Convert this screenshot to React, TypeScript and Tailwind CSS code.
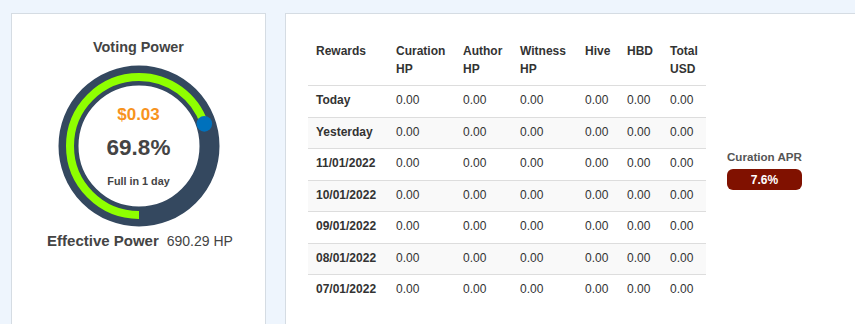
import React from "react";

const font = { fontFamily: '"Liberation Sans", Arial, sans-serif' };

const rows = [
  "Today",
  "Yesterday",
  "11/01/2022",
  "10/01/2022",
  "09/01/2022",
  "08/01/2022",
  "07/01/2022",
];

const colWidths = ["w-[80px]", "w-[67px]", "w-[57px]", "w-[65px]", "w-[42px]", "w-[43px]", "w-[44px]"];

function VotingDonut({ pct }: { pct: number }) {
  const r = 69;
  const c = 2 * Math.PI * r;
  const angle = ((90 + pct * 3.6) * Math.PI) / 180;
  const dotX = 81 + r * Math.cos(angle);
  const dotY = 81 + r * Math.sin(angle);
  return (
    <div className="relative w-[162px] h-[162px]">
      <svg width="162" height="162" viewBox="0 0 162 162">
        <circle cx="81" cy="81" r="70.5" fill="none" stroke="#34485f" strokeWidth="20" />
        <circle
          cx="81"
          cy="81"
          r={r}
          fill="none"
          stroke="#8fff00"
          strokeWidth="8"
          strokeDasharray={`${(pct / 100) * c} ${c}`}
          transform="rotate(90 81 81)"
        />
        <circle cx={dotX} cy={dotY} r="7.8" fill="#0071bc" />
      </svg>
      <div className="absolute inset-0 flex flex-col items-center pt-[40px]">
        <div className="text-[17px] leading-[20px] font-bold text-[#f7931e]">$0.03</div>
        <div className="mt-[9px] text-[22.5px] leading-[28px] font-bold text-[#444]">69.8%</div>
        <div className="mt-[12px] text-[10.8px] leading-[14px] font-bold text-[#444]">Full in 1 day</div>
      </div>
    </div>
  );
}

export default function App() {
  return (
    <div style={font} className="w-[855px] h-[324px] overflow-hidden bg-[#eef5fd] pl-[11px] pt-[13px] flex gap-[19px]">
      <div className="w-[255px] h-[340px] shrink-0 bg-white border border-[#d5dce3] flex flex-col items-center pt-[24px]">
        <div className="text-[14.4px] leading-[18px] font-bold text-[#444]">Voting Power</div>
        <div className="mt-[9px]">
          <VotingDonut pct={69.8} />
        </div>
        <div className="mt-[5px] flex items-baseline gap-[8px] text-[#444] leading-[18px] pl-[3px]">
          <span className="text-[15px] font-bold">Effective Power</span>
          <span className="text-[14px]">690.29 HP</span>
        </div>
      </div>

      <div className="w-[620px] h-[340px] shrink-0 bg-white border border-[#d5dce3] pl-[22px] pt-[21px] flex items-start">
        <div className="flex items-center gap-[21px]">
          <table className="table-fixed border-collapse w-[398px] text-[12px] text-[#333]">
            <thead>
              <tr className="border-b border-[#dddddd]">
                {["Rewards", "Curation|HP", "Author|HP", "Witness|HP", "Hive", "HBD", "Total|USD"].map((h, i) => (
                  <th
                    key={h}
                    className={`${colWidths[i]} text-left align-top font-bold px-[8px] pt-[7px] pb-[7px] leading-[18px] h-[50px]`}
                  >
                    {h.split("|").map((p, j) => (
                      <div key={j}>{p}</div>
                    ))}
                  </th>
                ))}
              </tr>
            </thead>
            <tbody>
              {rows.map((d, i) => (
                <tr key={d} className={`${i < rows.length - 1 ? "border-b border-[#dddddd]" : ""} ${i % 2 === 1 ? "bg-[#f9f9f9]" : "bg-white"}`}>
                  <td className="px-[8px] pt-[5px] pb-[7px] leading-[18.5px] font-bold whitespace-nowrap">{d}</td>
                  {[0, 1, 2, 3, 4, 5].map((k) => (
                    <td key={k} className="px-[8px] pt-[5px] pb-[7px] leading-[18.5px]">
                      0.00
                    </td>
                  ))}
                </tr>
              ))}
            </tbody>
          </table>

          <div className="flex flex-col items-stretch w-[75px]">
            <div className="text-[11.6px] leading-[14px] font-bold text-[#555] whitespace-nowrap">Curation APR</div>
            <div className="mt-[5px] h-[21px] rounded-[6px] bg-[#801100] text-white text-[12px] font-bold flex items-center justify-center">
              7.6%
            </div>
          </div>
        </div>
      </div>
    </div>
  );
}
